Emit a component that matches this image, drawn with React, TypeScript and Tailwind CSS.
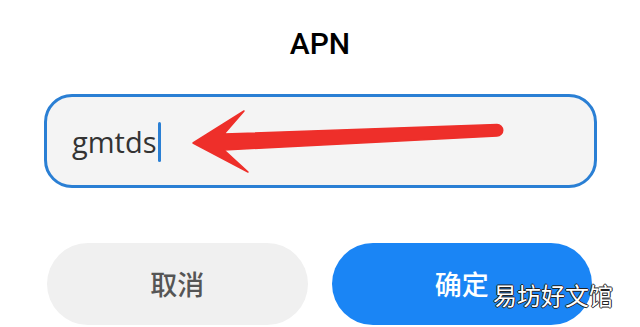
import React from "react";

const cjk = "font-['Noto_Sans_CJK_SC',sans-serif]";

function Arrow() {
  return (
    <svg
      className="absolute left-0 top-0 pointer-events-none"
      width="640"
      height="327"
      viewBox="0 0 640 327"
    >
      <path
        d="M193 143 L244 111 L224 134 L497 124.5 A5.5 5.5 0 0 1 497 136 L224 150 L248 172 Z"
        fill="#ee2f2a"
        stroke="#ee2f2a"
        strokeWidth="1.5"
        strokeLinejoin="round"
      />
    </svg>
  );
}

export default function App() {
  return (
    <div className="relative w-[640px] h-[327px] overflow-hidden bg-white">
      <div className="flex h-[88px] items-center justify-center">
        <h1 className="font-['Roboto',sans-serif] text-[30px] leading-none font-medium text-black">
          APN
        </h1>
      </div>

      <div className="mt-[6px] ml-[44px] mr-[43px] h-[94px] rounded-[28px] border-[3px] border-[#2a7fd4] bg-[#f4f4f4] flex items-center pl-[25px]">
        <span className="font-['Open_Sans',sans-serif] text-[29px] leading-none font-medium text-[#333]">
          gmtds
        </span>
        <span className="ml-[1px] mt-[2px] w-[3px] h-[40px] bg-[#2a7fd4] rounded-sm" />
      </div>

      <div className="mt-[55px] ml-[47px] mr-[48px] flex gap-[24px]">
        <button
          className={`h-[82px] flex-1 rounded-full bg-[#f0f0f0] text-[27px] font-medium text-[#555] ${cjk}`}
        >
          取消
        </button>
        <button
          className={`h-[82px] flex-1 rounded-full bg-[#1a85f5] text-[27px] font-medium text-white ${cjk}`}
        >
          确定
        </button>
      </div>

      <Arrow />

      <span
        className={`absolute left-[493px] top-[283px] text-[24px] leading-none text-white [text-shadow:1px_0_#222,-1px_0_#222,0_1px_#222,0_-1px_#222] ${cjk}`}
      >
        易坊好文馆
      </span>
    </div>
  );
}
